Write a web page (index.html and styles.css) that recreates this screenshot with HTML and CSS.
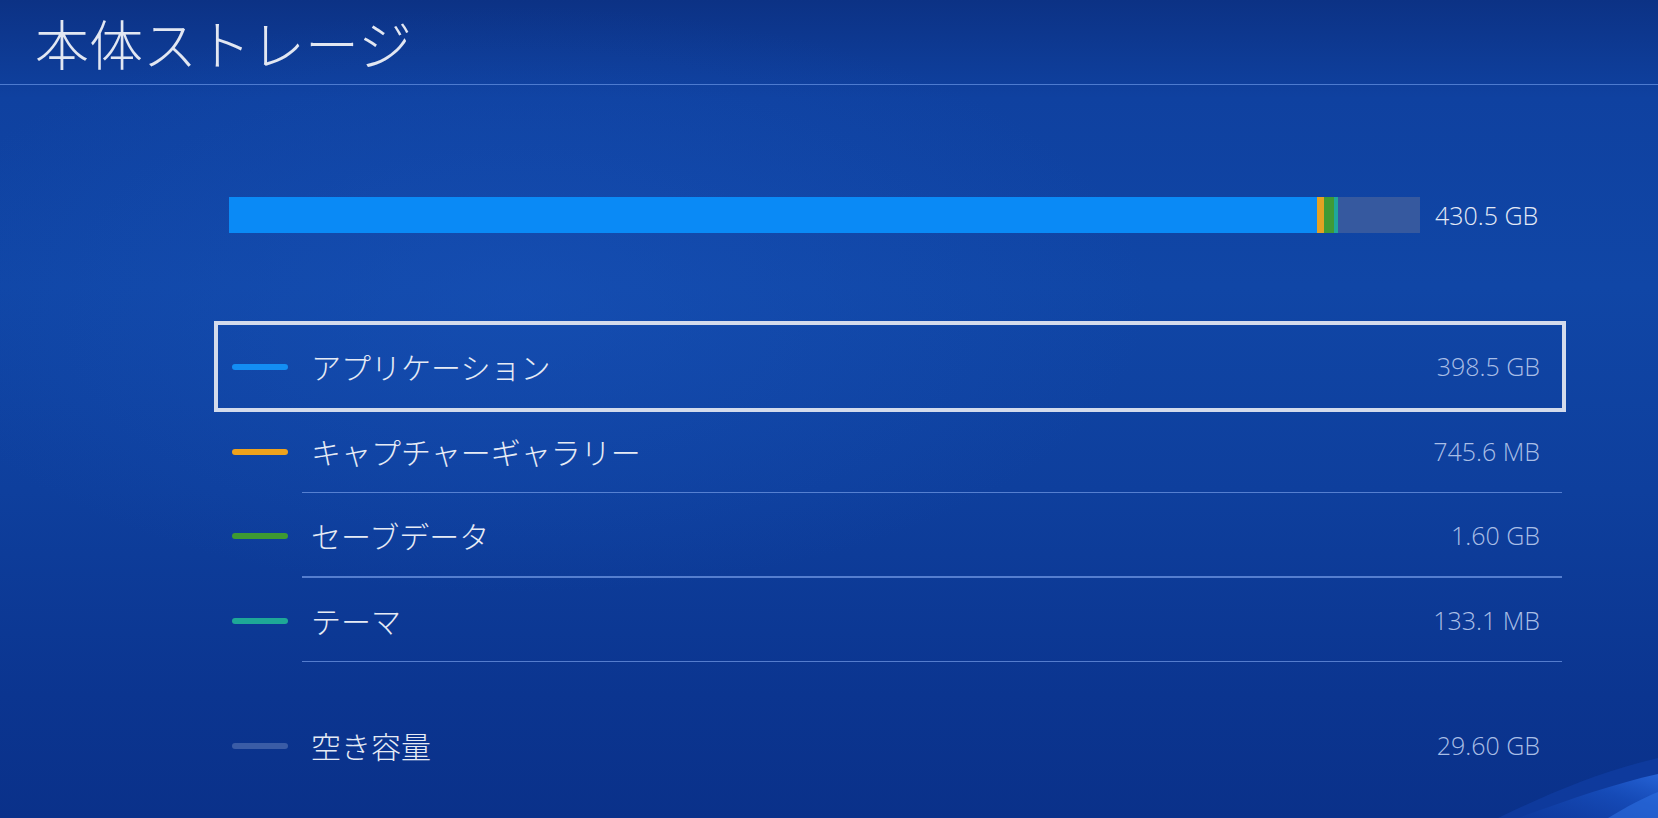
FILE: index.html
```html
<!DOCTYPE html>
<html lang="ja">
<head>
<meta charset="utf-8">
<title>本体ストレージ</title>
<link rel="stylesheet" href="styles.css">
</head>
<body>
<div class="screen">
  <header class="header">
    <h1 class="title">本体ストレージ</h1>
  </header>

  <section class="usage">
    <div class="bar">
      <div class="seg seg-app"></div>
      <div class="seg seg-capture"></div>
      <div class="seg seg-save"></div>
      <div class="seg seg-theme"></div>
      <div class="seg seg-free"></div>
    </div>
    <div class="bar-total">430.5 GB</div>
  </section>

  <ul class="list">
    <li class="row selected">
      <span class="swatch sw-app"></span>
      <span class="label">アプリケーション</span>
      <span class="value">398.5 GB</span>
    </li>
    <li class="row">
      <span class="swatch sw-capture"></span>
      <span class="label">キャプチャーギャラリー</span>
      <span class="value">745.6 MB</span>
    </li>
    <li class="row">
      <span class="swatch sw-save"></span>
      <span class="label">セーブデータ</span>
      <span class="value">1.60 GB</span>
    </li>
    <li class="row">
      <span class="swatch sw-theme"></span>
      <span class="label">テーマ</span>
      <span class="value">133.1 MB</span>
    </li>
    <li class="row free">
      <span class="swatch sw-free"></span>
      <span class="label">空き容量</span>
      <span class="value">29.60 GB</span>
    </li>
  </ul>

  <svg class="wave" width="220" height="90" viewBox="0 0 220 90" aria-hidden="true">
    <defs>
      <linearGradient id="wg" x1="0" y1="1" x2="1" y2="0">
        <stop offset="0" stop-color="#1446b4" stop-opacity="0.15"/>
        <stop offset="0.6" stop-color="#1a55c8" stop-opacity="0.6"/>
        <stop offset="1" stop-color="#2a6ae0" stop-opacity="0.85"/>
      </linearGradient>
    </defs>
    <path d="M60 90 C110 66 160 44 220 30 L220 90 Z" fill="#1446b6" opacity="0.4"/>
    <path d="M80 90 C130 72 175 56 220 46 L220 90 Z" fill="url(#wg)"/>
    <path d="M170 90 C190 78 205 70 220 64 L220 90 Z" fill="#2f72e6" opacity="0.55"/>
  </svg>
</div>
</body>
</html>
```

FILE: styles.css
```css
html, body {
  margin: 0;
  padding: 0;
}

body {
  width: 1658px;
  height: 818px;
  overflow: hidden;
  font-family: "Noto Sans CJK JP", "Open Sans", sans-serif;
  color: #e6ebf5;
}

.screen {
  position: relative;
  width: 1658px;
  height: 818px;
  overflow: hidden;
  background:
    radial-gradient(ellipse 900px 420px at 520px 300px, rgba(26, 86, 190, 0.45), rgba(26, 86, 190, 0) 70%),
    linear-gradient(180deg, #0c3285 0%, #0f41a0 12%, #1046a6 35%, #0e3f9d 60%, #0b3590 85%, #0a318a 100%);
}

.header {
  height: 84px;
  border-bottom: 1px solid #4d7bd0;
  display: flex;
  align-items: center;
  padding-left: 35px;
}

.title {
  margin: 0;
  font-size: 54px;
  font-weight: 300;
  line-height: 80px;
  color: #e2e7f2;
  padding-top: 2px;
}

.usage {
  display: flex;
  align-items: center;
  margin-top: 112px;
  padding-left: 229px;
  height: 36px;
}

.bar {
  display: flex;
  width: 1191px;
  height: 36px;
}

.seg {
  height: 100%;
}

.seg-app { width: 1088px; background: #0a8af6; }
.seg-capture { width: 7px; background: #e3a224; }
.seg-save { width: 10px; background: #3f9a35; }
.seg-theme { width: 4px; background: #1fa79a; }
.seg-free { width: 82px; background: #36599f; }

.bar-total {
  margin-left: 15px;
  font-family: "Open Sans", sans-serif;
  font-weight: 300;
  font-size: 25px;
  color: #e4eaf6;
}

.list {
  list-style: none;
  margin: 91px 0 0 217px;
  padding: 0;
  width: 1346px;
}

.row {
  position: relative;
  display: flex;
  align-items: center;
  height: 84.5px;
  padding: 0 23px 0 15px;
  box-sizing: border-box;
}

.row::after {
  content: "";
  position: absolute;
  left: 85px;
  right: 1px;
  bottom: 0;
  height: 1.5px;
  background: rgba(110, 150, 225, 0.75);
}

.row.selected {
  outline: 4px solid #d3dbec;
  outline-offset: -1px;
}

.row.selected::after,
.row.free::after {
  display: none;
}

.row.free {
  margin-top: 41px;
}

.swatch {
  flex: none;
  width: 56px;
  height: 6px;
  border-radius: 3px;
  margin-top: 2px;
}

.sw-app { background: #138ef4; }
.sw-capture { background: #eea21c; }
.sw-save { background: #3e9a32; }
.sw-theme { background: #1ea897; }
.sw-free { background: #3a5ca6; }

.label {
  margin-left: 23px;
  font-size: 30px;
  font-weight: 300;
  color: #e6ebf5;
  flex: 1;
  line-height: 1;
}

.value {
  font-family: "Open Sans", sans-serif;
  font-weight: 300;
  font-size: 25px;
  color: #a9bee6;
}

.wave {
  position: absolute;
  right: 0;
  bottom: 0;
}
```
